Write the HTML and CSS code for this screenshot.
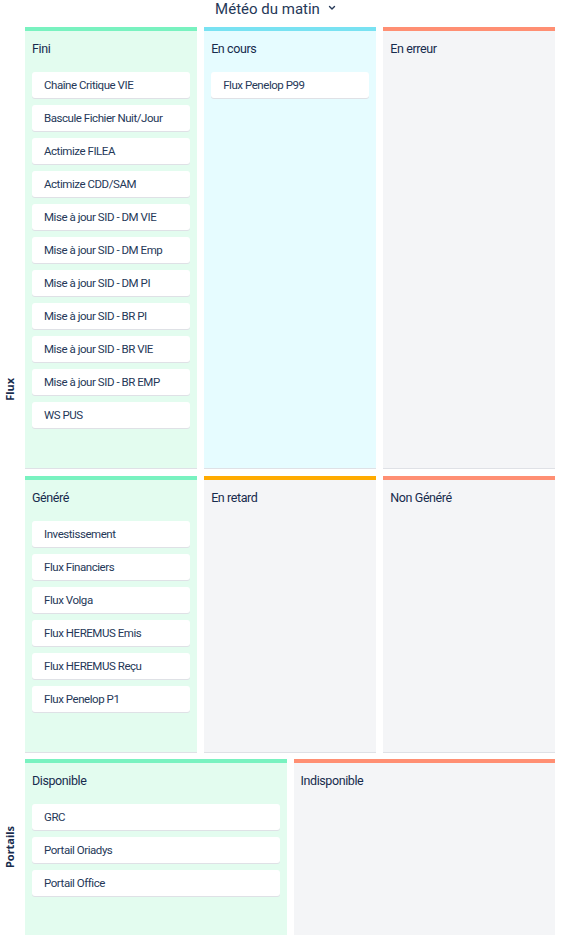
FILE: index.html
```html
<!DOCTYPE html>
<html lang="fr">
<head>
<meta charset="utf-8">
<title>Météo du matin</title>
<link rel="stylesheet" href="styles.css">
</head>
<body>
<header class="header">
  <h1 class="title">Météo du matin</h1>
  <svg class="chevron" width="8" height="6" viewBox="0 0 8 6"><path d="M1.5 1.5 L4 4 L6.5 1.5" fill="none" stroke="#253858" stroke-width="1.4" stroke-linecap="round" stroke-linejoin="round"/></svg>
</header>

<section class="group">
  <div class="group-label"><span>Flux</span></div>
  <div class="board board-3">
    <div class="col col-green">
      <h2 class="col-title">Fini</h2>
      <div class="cards">
        <div class="card">Chaîne Critique VIE</div>
        <div class="card">Bascule Fichier Nuit/Jour</div>
        <div class="card">Actimize FILEA</div>
        <div class="card">Actimize CDD/SAM</div>
        <div class="card">Mise à jour SID - DM VIE</div>
        <div class="card">Mise à jour SID - DM Emp</div>
        <div class="card">Mise à jour SID - DM PI</div>
        <div class="card">Mise à jour SID - BR PI</div>
        <div class="card">Mise à jour SID - BR VIE</div>
        <div class="card">Mise à jour SID - BR EMP</div>
        <div class="card">WS PUS</div>
      </div>
    </div>
    <div class="col col-cyan">
      <h2 class="col-title">En cours</h2>
      <div class="cards">
        <div class="card">Flux Penelop P99</div>
      </div>
    </div>
    <div class="col col-red">
      <h2 class="col-title">En erreur</h2>
      <div class="cards"></div>
    </div>
    <div class="col col-green">
      <h2 class="col-title">Généré</h2>
      <div class="cards">
        <div class="card">Investissement</div>
        <div class="card">Flux Financiers</div>
        <div class="card">Flux Volga</div>
        <div class="card">Flux HEREMUS Emis</div>
        <div class="card">Flux HEREMUS Reçu</div>
        <div class="card">Flux Penelop P1</div>
      </div>
    </div>
    <div class="col col-orange">
      <h2 class="col-title">En retard</h2>
      <div class="cards"></div>
    </div>
    <div class="col col-red">
      <h2 class="col-title">Non Généré</h2>
      <div class="cards"></div>
    </div>
  </div>
</section>

<section class="group">
  <div class="group-label"><span>Portails</span></div>
  <div class="board board-2">
    <div class="col col-green">
      <h2 class="col-title">Disponible</h2>
      <div class="cards">
        <div class="card">GRC</div>
        <div class="card">Portail Oriadys</div>
        <div class="card">Portail Office</div>
      </div>
    </div>
    <div class="col col-red">
      <h2 class="col-title">Indisponible</h2>
      <div class="cards"></div>
    </div>
  </div>
</section>
</body>
</html>
```

FILE: styles.css
```css
* { box-sizing: border-box; }
body {
  margin: 0;
  background: #ffffff;
  font-family: Roboto, "Noto Sans", sans-serif;
  color: #253858;
}
.header {
  height: 27px;
  display: flex;
  align-items: center;
  justify-content: center;
  gap: 8px;
  padding-right: 10px;
}
.title {
  margin: 0;
  font-size: 15px;
  font-weight: 400;
  line-height: 18px;
  color: #253858;
  margin-top: -9px;
}
.chevron { margin-top: -12px; }
.group {
  display: flex;
  padding-right: 6px;
  margin-bottom: 7px;
}
.group-label {
  width: 25px;
  flex: none;
  display: flex;
  align-items: center;
  justify-content: center;
  padding-right: 7px;
}
.group-label span {
  writing-mode: vertical-rl;
  transform: rotate(180deg);
  font-family: "Noto Sans", sans-serif;
  font-size: 11px;
  font-weight: 700;
  color: #172b4d;
}
.board {
  flex: 1;
  display: grid;
  gap: 8px 7.5px;
}
.board-3 { grid-template-columns: 1fr 1fr 1fr; }
.board-2 { grid-template-columns: 1fr 1fr; gap: 8px 7px; }
.col {
  border-top: 4px solid;
  padding: 8px 7px 40px;
  box-shadow: 0 1px 0 #dfe1e6;
}
.col-green { border-top-color: #79f2c0; background: #e3fcef; }
.col-cyan { border-top-color: #79e2f2; background: #e6fcff; }
.col-red { border-top-color: #ff8f73; background: #f4f5f7; }
.col-orange { border-top-color: #ffab00; background: #f4f5f7; }
.col-title {
  margin: 0 0 13px;
  font-size: 12.5px;
  letter-spacing: -0.4px;
  font-weight: 400;
  line-height: 20px;
  color: #172b4d;
}
.cards {
  display: flex;
  flex-direction: column;
  gap: 7px;
}
.card {
  background: #ffffff;
  border-radius: 3px;
  box-shadow: 0 1px 0 #dfe1e6;
  height: 26px;
  display: flex;
  align-items: center;
  padding-left: 12px;
  font-size: 11.5px;
  letter-spacing: -0.45px;
  color: #253858;
  white-space: nowrap;
}
```
